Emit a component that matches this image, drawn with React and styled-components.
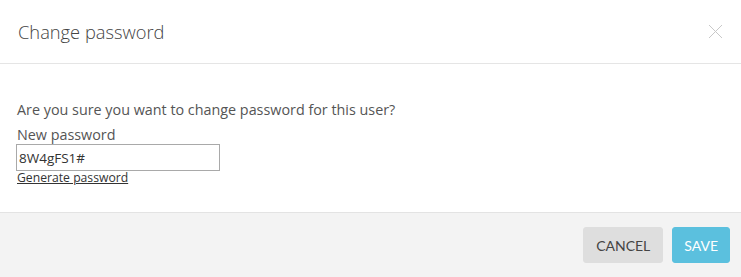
import React, { useState } from 'react'
import styled, { createGlobalStyle } from 'styled-components'

const GlobalStyle = createGlobalStyle`
  html, body {
    margin: 0;
    padding: 0;
    background: #fff;
  }
  body {
    font-family: "Open Sans", "Noto Sans", sans-serif;
    color: #444;
  }
`

function App() {
  const [password, setPassword] = useState('8W4gFS1#')

  const generate = (e) => {
    e.preventDefault()
    const chars = 'ABCDEFGHJKLMNPQRSTUVWXYZabcdefghijkmnpqrstuvwxyz23456789#!$'
    let out = ''
    for (let i = 0; i < 8; i++) out += chars[Math.floor(Math.random() * chars.length)]
    setPassword(out)
  }

  return (
    <>
      <GlobalStyle />
      <Modal>
        <Header>
          <Title>Change password</Title>
          <Close aria-label='Close'>
            <svg width='15' height='15' viewBox='0 0 15 15'>
              <path d='M1 1L14 14M14 1L1 14' stroke='#c8c8c8' strokeWidth='1' fill='none' />
            </svg>
          </Close>
        </Header>
        <Body>
          <Question>Are you sure you want to change password for this user?</Question>
          <Label htmlFor='new-password'>New password</Label>
          <Input
            id='new-password'
            type='text'
            value={password}
            onChange={(e) => setPassword(e.currentTarget.value)}
          />
          <GenerateLink href='#' onClick={generate}>Generate password</GenerateLink>
        </Body>
        <Footer>
          <Button>CANCEL</Button>
          <Button $primary>SAVE</Button>
        </Footer>
      </Modal>
    </>
  )
}

const Modal = styled.div`
  width: 741px;
  height: 277px;
  display: flex;
  flex-direction: column;
  background: #fff;
`

const Header = styled.div`
  height: 64px;
  box-sizing: border-box;
  padding: 0 18px 1px;
  display: flex;
  align-items: center;
  justify-content: space-between;
  border-bottom: 1px solid #e5e5e5;
`

const Title = styled.h4`
  margin: 0;
  font-size: 18.3px;
  font-weight: 300;
  color: #444;
`

const Close = styled.button`
  border: 0;
  background: none;
  padding: 0;
  width: 15px;
  height: 15px;
  display: flex;
  cursor: pointer;
`

const Body = styled.div`
  flex: 1;
  padding: 37px 16px 0;
  display: flex;
  flex-direction: column;
  align-items: flex-start;
`

const Question = styled.p`
  margin: 0 0 7px 1px;
  font-size: 14.35px;
  line-height: 18px;
  color: #555;
`

const Label = styled.label`
  margin-left: 1px;
  font-size: 14.35px;
  line-height: 18px;
  color: #555;
`

const Input = styled.input`
  box-sizing: border-box;
  width: 204px;
  height: 27px;
  margin: 0;
  padding: 1px 2px;
  border: 1px solid #a9a9a9;
  font-family: "Open Sans", "Noto Sans", sans-serif;
  font-size: 13.5px;
  color: #333;
  outline: none;
`

const GenerateLink = styled.a`
  margin-left: 1px;
  font-family: "Open Sans", "Noto Sans", sans-serif;
  font-size: 12.2px;
  line-height: 13px;
  color: #333;
  text-decoration: underline;
`

const Footer = styled.div`
  height: 65px;
  box-sizing: border-box;
  border-top: 1px solid #e3e3e3;
  background: #f3f3f3;
  padding: 0 11px 0 0;
  display: flex;
  align-items: center;
  justify-content: flex-end;
  gap: 9px;
`

const Button = styled.button`
  height: 36px;
  padding: 0 ${(p) => (p.$primary ? '11px' : '12px')};
  border: 1px solid ${(p) => (p.$primary ? '#5bc0de' : '#dedede')};
  border-radius: 3px;
  background: ${(p) => (p.$primary ? '#5bc0de' : '#dedede')};
  color: ${(p) => (p.$primary ? '#fff' : '#444')};
  font-family: Lato, "Open Sans", sans-serif;
  font-size: 14px;
  cursor: pointer;
`

export default App
